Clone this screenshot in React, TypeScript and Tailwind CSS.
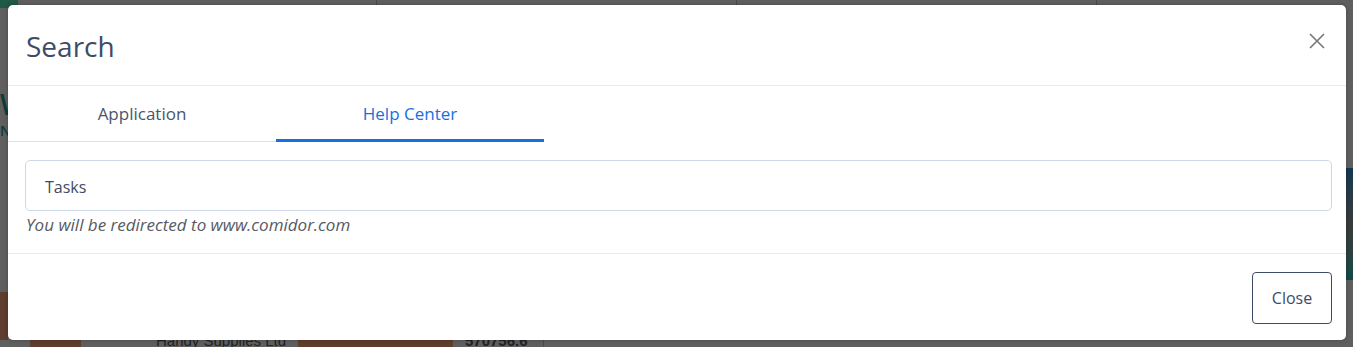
import React from "react";

export default function App() {
  const font = { fontFamily: '"Open Sans", "Noto Sans", sans-serif' };
  return (
    <div
      className="relative w-[1353px] h-[347px] overflow-hidden bg-[#5f5f5f]"
      style={font}
    >
      {/* background page (dimmed) */}
      <div className="flex flex-col h-full">
        <div className="flex h-[8px]">
          <div className="w-[18px] bg-[#1f5a45]" />
          <div className="w-[359px] border-r border-[#4a4a4a]" />
          <div className="w-[360px] border-r border-[#4a4a4a]" />
          <div className="w-[360px] border-r border-[#4a4a4a]" />
          <div className="flex-1" />
        </div>
        <div className="flex flex-col pl-[0px] pt-[82px] text-[#0f3b37] font-semibold">
          <span className="text-[28px] leading-none">W</span>
          <span className="text-[14px] mt-[6px] leading-none">N</span>
        </div>
        <div className="flex-1" />
        <div className="flex h-[48px]">
          <div className="w-[8px] bg-[#5e3e2e]" />
          <div className="flex-1" />
        </div>
        <div
          className="flex h-[7px] items-start text-[15px] leading-[14px] text-[#222]"
          style={{ fontFamily: '"Liberation Sans", Arial, sans-serif' }}
        >
          <div className="w-[30px]" />
          <div className="w-[51px] h-full bg-[#5e3e2e]" />
          <div className="w-[75px]" />
          <div className="w-[142px] overflow-hidden whitespace-nowrap -mt-[6px]">Handy Supplies Ltd</div>
          <div className="w-[155px] h-full bg-[#5e3e2e]" />
          <div className="w-[12px]" />
          <div className="w-[79px] font-bold -mt-[6px] border-r border-[#4a4a4a]">570756.6</div>
          <div className="flex-1" />
        </div>
      </div>

      {/* right edge image strip */}
      <div className="absolute right-0 top-[168px] w-[7px] h-[112px] bg-gradient-to-b from-[#12384f] via-[#3a3a3a] to-[#0f4a48]" />

      {/* modal */}
      <div className="absolute left-[8px] top-[5px] w-[1338px] h-[335px] bg-white rounded-[5px] flex flex-col shadow-[0_0_4px_rgba(0,0,0,0.25)]">
        {/* header */}
        <div className="flex items-center justify-between h-[81px] pl-[18px] pr-[20px] pt-[2px] border-b border-[#e9ecef]">
          <h2 className="text-[28px] leading-[34px] text-[#3e4b67] font-normal">Search</h2>
          <svg width="18" height="18" viewBox="0 0 18 18" className="mt-[-10px]">
            <path d="M2 2 L16 16 M16 2 L2 16" stroke="#767676" strokeWidth="1.6" fill="none" />
          </svg>
        </div>
        {/* tabs */}
        <div className="flex h-[56px]">
          <div className="w-[268px] flex items-center justify-center text-[17px] text-[#4a556b] border-b border-[#dcdfe4] pt-[1px]">
            Application
          </div>
          <div className="w-[268px] flex items-center justify-center text-[17px] text-[#1870dc] border-b-[3px] border-[#1870dc] pt-[2px]">
            Help Center
          </div>
          <div className="flex-1" />
        </div>
        {/* body */}
        <div className="flex flex-col pl-[17px] pr-[14px] pt-[18px] pb-[16px] border-b border-[#e9ecef]">
          <div className="h-[51px] border border-[#ced8e6] rounded-[5px] flex items-center pl-[19px] pt-[2px] text-[16px] text-[#3e4b67]">
            Tasks
          </div>
          <div className="italic text-[17px] leading-[24px] text-[#555a63] pl-[1px] mt-[2px]">
            You will be redirected to www.comidor.com
          </div>
        </div>
        {/* footer */}
        <div className="flex-1 flex justify-end items-start pt-[18px] pr-[14px]">
          <button className="w-[80px] h-[52px] border border-[#3e4b67] rounded-[4px] text-[16px] text-[#3e4b67] bg-white">
            Close
          </button>
        </div>
      </div>
    </div>
  );
}
